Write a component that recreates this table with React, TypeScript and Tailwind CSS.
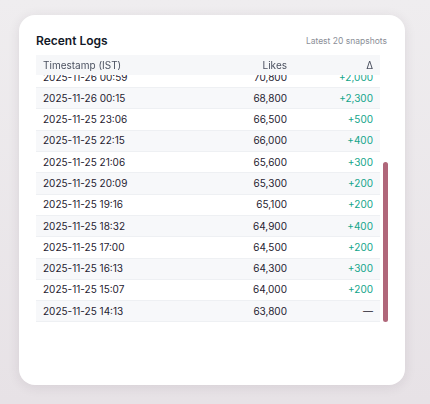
import { useEffect, useRef, useState } from "react";

type Log = { ts: string; likes: string; delta: string | null };

const LOGS: Log[] = [
  { ts: "2025-11-26 07:42", likes: "84,600", delta: "+1,800" },
  { ts: "2025-11-26 06:55", likes: "82,800", delta: "+1,600" },
  { ts: "2025-11-26 05:48", likes: "81,200", delta: "+2,100" },
  { ts: "2025-11-26 04:37", likes: "79,100", delta: "+1,900" },
  { ts: "2025-11-26 03:26", likes: "77,200", delta: "+1,700" },
  { ts: "2025-11-26 02:58", likes: "75,500", delta: "+2,400" },
  { ts: "2025-11-26 02:11", likes: "73,100", delta: "+1,200" },
  { ts: "2025-11-26 01:30", likes: "71,900", delta: "+1,100" },
  { ts: "2025-11-26 00:59", likes: "70,800", delta: "+2,000" },
  { ts: "2025-11-26 00:15", likes: "68,800", delta: "+2,300" },
  { ts: "2025-11-25 23:06", likes: "66,500", delta: "+500" },
  { ts: "2025-11-25 22:15", likes: "66,000", delta: "+400" },
  { ts: "2025-11-25 21:06", likes: "65,600", delta: "+300" },
  { ts: "2025-11-25 20:09", likes: "65,300", delta: "+200" },
  { ts: "2025-11-25 19:16", likes: "65,100", delta: "+200" },
  { ts: "2025-11-25 18:32", likes: "64,900", delta: "+400" },
  { ts: "2025-11-25 17:00", likes: "64,500", delta: "+200" },
  { ts: "2025-11-25 16:13", likes: "64,300", delta: "+300" },
  { ts: "2025-11-25 15:07", likes: "64,000", delta: "+200" },
  { ts: "2025-11-25 14:13", likes: "63,800", delta: null },
];

export default function App() {
  const scrollRef = useRef<HTMLDivElement>(null);
  const [thumb, setThumb] = useState({ top: 0, height: 0 });

  useEffect(() => {
    const el = scrollRef.current;
    if (!el) return;
    el.scrollTop = el.scrollHeight;
    const ratio = el.clientHeight / el.scrollHeight;
    setThumb({ top: el.scrollTop * ratio, height: el.clientHeight * ratio });
  }, []);

  return (
    <div
      className="h-[404px] w-[430px] bg-gradient-to-b from-[#efedef] to-[#e7e2e6] pl-[19px] pt-[15px]"
      style={{ fontFamily: "Inter, 'Noto Sans', sans-serif" }}
    >
      <div className="flex h-[370px] w-[386px] flex-col rounded-[16px] bg-white px-[17px] pt-[17px] shadow-[0_2px_12px_rgba(60,40,60,0.10)]">
        <div className="flex h-[18px] items-center justify-between">
          <h2 className="text-[12px] font-semibold text-[#111827]">Recent Logs</h2>
          <span className="pr-px text-[8.5px] text-[#8b8f98]">Latest 20 snapshots</span>
        </div>

        <div className="relative mt-[5px] h-[267px]">
          <div ref={scrollRef} className="h-full overflow-y-auto [scrollbar-width:none]">
            <table className="w-[344px] border-collapse text-[10px]">
              <thead className="sticky top-0 z-10 bg-[#f6f7f9]">
                <tr className="h-[20px] text-[#4b5160]">
                  <th className="pl-[7px] text-left font-normal">Timestamp (IST)</th>
                  <th className="pr-[7px] text-right font-normal">Likes</th>
                  <th className="pr-[7px] text-right font-normal">Δ</th>
                </tr>
              </thead>
              <tbody>
                {LOGS.map((log, i) => (
                  <tr
                    key={log.ts}
                    className={
                      "h-[21.3px] border-b border-[#eef0f3] text-[#1f2230] " +
                      (i % 2 === 1 ? "bg-[#f7f8fa]" : "bg-white")
                    }
                  >
                    <td className="pl-[7px]">{log.ts}</td>
                    <td className="w-[120px] pr-[7px] text-right">{log.likes}</td>
                    <td className="w-[86px] pr-[7px] text-right">
                      {log.delta ? (
                        <span className="text-[#13a58a]">{log.delta}</span>
                      ) : (
                        <span className="text-[#1f2230]">—</span>
                      )}
                    </td>
                  </tr>
                ))}
              </tbody>
            </table>
          </div>
          <div
            className="absolute right-0 w-[5px] rounded-full bg-[#b0677a]"
            style={{ top: thumb.top, height: thumb.height }}
          />
        </div>
      </div>
    </div>
  );
}
